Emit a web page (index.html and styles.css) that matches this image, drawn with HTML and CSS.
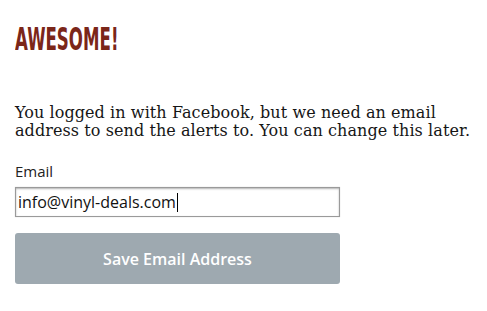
FILE: index.html
```html
<!DOCTYPE html>
<html>
<head>
<meta charset="utf-8">
<link rel="stylesheet" href="styles.css">
</head>
<body>
<div class="page">
  <h1 class="title"><span class="title-text">AWESOME!</span></h1>
  <p class="intro">You logged in with Facebook, but we need an email address to send the alerts to. You can change this later.</p>
  <form class="form">
    <label class="label" for="email">Email</label>
    <div class="field"><span class="value">info@vinyl-deals.com</span><span class="caret"></span></div>
    <button type="button" class="btn">Save Email Address</button>
  </form>
</div>
</body>
</html>
```

FILE: styles.css
```css
html, body { margin: 0; padding: 0; background: #fff; }
.page { padding: 24px 15px 0 15px; }
.title { margin: 0; height: 30px; font-family: "DejaVu Sans", sans-serif; font-weight: bold; font-size: 32px; line-height: 30px; color: #7b2619; }
.title-text { display: inline-block; transform: scaleX(0.52); transform-origin: left center; }
.intro { margin: 50px 0 0 0; font-family: "DejaVu Serif", serif; font-size: 16px; line-height: 18px; letter-spacing: 0.08px; color: #161616; width: 465px; }
.form { margin-top: 22px; display: flex; flex-direction: column; align-items: flex-start; }
.label { font-family: "Open Sans", sans-serif; font-size: 15px; line-height: 18px; color: #222; }
.field { margin-top: 7px; box-sizing: border-box; width: 325px; height: 30px; border: 1px solid #9a9a9a; box-shadow: inset 0 1px 2px rgba(0,0,0,0.3), 0 0 1px rgba(0,0,0,0.2); padding: 0 2px; display: flex; align-items: center; font-family: "Open Sans", sans-serif; font-size: 16px; color: #111; }
.caret { display: inline-block; width: 1px; height: 19px; background: #000; margin-left: 1px; }
.btn { margin-top: 16px; width: 325px; height: 51px; border: none; border-radius: 3px; background: #9ea9b0; color: #fff; font-family: "Open Sans", sans-serif; font-weight: 600; font-size: 16px; padding: 0; }
```
